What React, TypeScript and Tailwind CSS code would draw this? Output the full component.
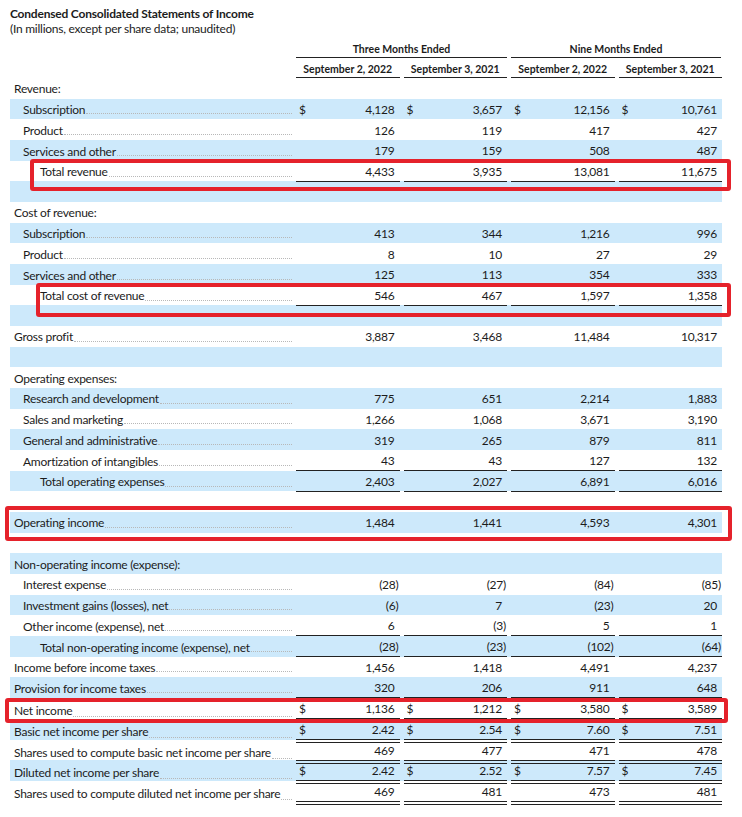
import React from 'react'

type Row = {
  label?: string
  indent?: 0 | 1 | 2
  values?: string[]
  dollar?: boolean
  line?: 'single' | 'double'
}

const rows: Row[] = [
  { label: 'Revenue:', indent: 0 },
  { label: 'Subscription', indent: 1, values: ['4,128', '3,657', '12,156', '10,761'], dollar: true },
  { label: 'Product', indent: 1, values: ['126', '119', '417', '427'] },
  { label: 'Services and other', indent: 1, values: ['179', '159', '508', '487'], line: 'single' },
  { label: 'Total revenue', indent: 2, values: ['4,433', '3,935', '13,081', '11,675'], line: 'single' },
  {},
  { label: 'Cost of revenue:', indent: 0 },
  { label: 'Subscription', indent: 1, values: ['413', '344', '1,216', '996'] },
  { label: 'Product', indent: 1, values: ['8', '10', '27', '29'] },
  { label: 'Services and other', indent: 1, values: ['125', '113', '354', '333'], line: 'single' },
  { label: 'Total cost of revenue', indent: 2, values: ['546', '467', '1,597', '1,358'], line: 'single' },
  {},
  { label: 'Gross profit', indent: 0, values: ['3,887', '3,468', '11,484', '10,317'] },
  {},
  { label: 'Operating expenses:', indent: 0 },
  { label: 'Research and development', indent: 1, values: ['775', '651', '2,214', '1,883'] },
  { label: 'Sales and marketing', indent: 1, values: ['1,266', '1,068', '3,671', '3,190'] },
  { label: 'General and administrative', indent: 1, values: ['319', '265', '879', '811'] },
  { label: 'Amortization of intangibles', indent: 1, values: ['43', '43', '127', '132'], line: 'single' },
  { label: 'Total operating expenses', indent: 2, values: ['2,403', '2,027', '6,891', '6,016'], line: 'single' },
  {},
  { label: 'Operating income', indent: 0, values: ['1,484', '1,441', '4,593', '4,301'] },
  {},
  { label: 'Non-operating income (expense):', indent: 0 },
  { label: 'Interest expense', indent: 1, values: ['(28)', '(27)', '(84)', '(85)'] },
  { label: 'Investment gains (losses), net', indent: 1, values: ['(6)', '7', '(23)', '20'] },
  { label: 'Other income (expense), net', indent: 1, values: ['6', '(3)', '5', '1'], line: 'single' },
  { label: 'Total non-operating income (expense), net', indent: 2, values: ['(28)', '(23)', '(102)', '(64)'], line: 'single' },
  { label: 'Income before income taxes', indent: 0, values: ['1,456', '1,418', '4,491', '4,237'] },
  { label: 'Provision for income taxes', indent: 0, values: ['320', '206', '911', '648'], line: 'single' },
  { label: 'Net income', indent: 0, values: ['1,136', '1,212', '3,580', '3,589'], dollar: true, line: 'double' },
  { label: 'Basic net income per share', indent: 0, values: ['2.42', '2.54', '7.60', '7.51'], dollar: true, line: 'double' },
  { label: 'Shares used to compute basic net income per share', indent: 0, values: ['469', '477', '471', '478'], line: 'double' },
  { label: 'Diluted net income per share', indent: 0, values: ['2.42', '2.52', '7.57', '7.45'], dollar: true, line: 'double' },
  { label: 'Shares used to compute diluted net income per share', indent: 0, values: ['469', '481', '473', '481'], line: 'double' },
]

const indentClass = ['pl-[4px]', 'pl-[13px]', 'pl-[30px]']

function Amount({ value }: { value: string }) {
  // negatives hang the closing paren into the right padding
  if (value.startsWith('(')) {
    return (
      <span>
        {value.slice(0, -1)}
        <span className="-mr-[4px]">)</span>
      </span>
    )
  }
  return <span>{value}</span>
}

function ValueCell({ value, dollar, line }: { value: string; dollar?: boolean; line?: Row['line'] }) {
  const border =
    line === 'single'
      ? 'border-b border-[#222]'
      : line === 'double'
        ? 'border-b-[4px] border-double border-[#222]'
        : ''
  return (
    <div className={`flex h-full items-center justify-between pl-[3px] pr-[5px] pt-[2px] ${border}`}>
      <span>{dollar ? '$' : ''}</span>
      <Amount value={value} />
    </div>
  )
}

function TableRow({ row, shaded }: { row: Row; shaded: boolean }) {
  const heading = row.label && !row.values
  return (
    <div
      className={`grid h-[20.68px] grid-cols-[282px_103.5px_103.5px_103.5px_103.5px] gap-x-[4px] ${
        shaded ? 'bg-[#cde9fb]' : ''
      }`}
    >
      <div className={`flex h-full items-center pt-[2px] ${indentClass[row.indent ?? 0]}`}>
        {row.label && <span className="whitespace-nowrap leading-[14px]">{row.label}</span>}
        {row.label && !heading && (
          <span className="mb-[5px] ml-[1px] flex-1 self-end border-b border-dotted border-[#b8b8b8]" />
        )}
      </div>
      {row.values?.map((v, i) => (
        <ValueCell key={i} value={v} dollar={row.dollar} line={row.line} />
      ))}
    </div>
  )
}

export default function App() {
  return (
    <div
      className="relative min-h-[817px] w-[742px] bg-white pl-[10px] pt-[6px] text-[12px] tracking-[-0.25px] text-[#1c1c1c]"
      style={{ fontFamily: 'Lato, "Open Sans", sans-serif' }}
    >
      <div className="text-[12px] font-bold leading-[16px] tracking-[-0.2px]">Condensed Consolidated Statements of Income</div>
      <div className="leading-[14px]">(In millions, except per share data; unaudited)</div>

      <div className="w-[712px] text-[10.5px] font-bold tracking-[0px]">
        <div className="grid h-[22px] grid-cols-[282px_211px_210px] gap-x-[4px]">
          <div />
          <div className="flex items-end justify-center border-b border-[#222] pb-[1px] leading-[14px]">
            Three Months Ended
          </div>
          <div className="flex items-end justify-center border-b border-[#222] pb-[1px] leading-[14px]">
            Nine Months Ended
          </div>
        </div>
        <div className="grid h-[20px] grid-cols-[282px_103.5px_103.5px_103.5px_103.5px] gap-x-[4px]">
          <div />
          {['September 2, 2022', 'September 3, 2021', 'September 2, 2022', 'September 3, 2021'].map((d, i) => (
            <div key={i} className="flex items-end justify-center border-b border-[#222] pb-[1px] leading-[14px]">
              {d}
            </div>
          ))}
        </div>
      </div>

      <div className="w-[712px]">
        {rows.map((r, i) => (
          <TableRow key={i} row={r} shaded={i % 2 === 1} />
        ))}
      </div>

      {/* highlight boxes */}
      <div className="absolute left-[30px] top-[159px] h-[32px] w-[701px] rounded-[3px] border-[4px] border-[#e5222b]" />
      <div className="absolute left-[36px] top-[283px] h-[34px] w-[695px] rounded-[3px] border-[4px] border-[#e5222b]" />
      <div className="absolute left-[5px] top-[506px] h-[35px] w-[727px] rounded-[3px] border-[4px] border-[#e5222b]" />
      <div className="absolute left-[5px] top-[698px] h-[25px] w-[723px] rounded-[3px] border-[4px] border-[#e5222b]" />
    </div>
  )
}
